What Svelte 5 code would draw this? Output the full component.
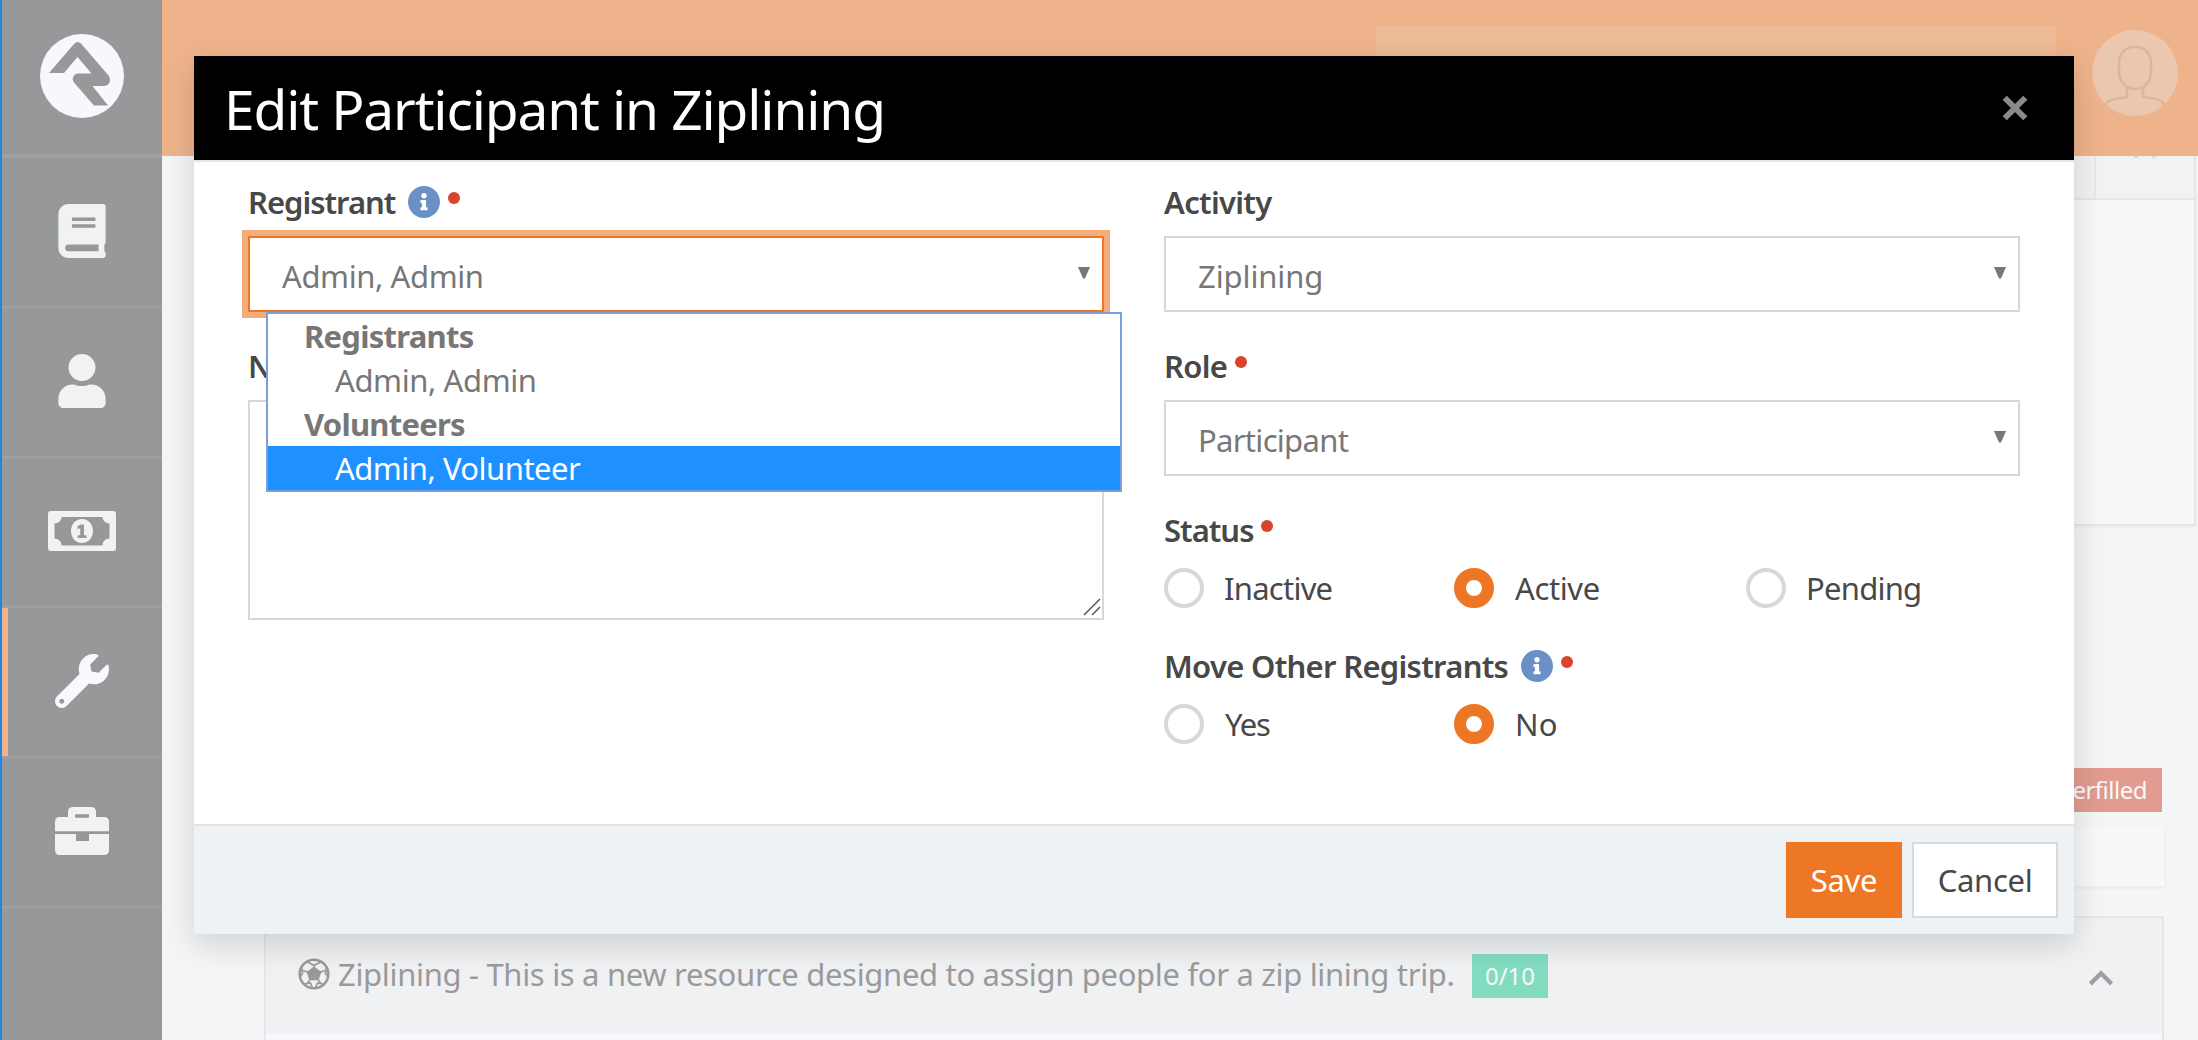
<script>
  const book =
    'M448 360V24c0-13.3-10.7-24-24-24H96C43 0 0 43 0 96v320c0 53 43 96 96 96h328c13.3 0 24-10.7 24-24v-16c0-7.5-3.5-14.3-8.9-18.7-4.2-15.4-4.2-59.3 0-74.7 5.4-4.3 8.9-11.1 8.9-18.6zM128 134c0-3.3 2.7-6 6-6h212c3.3 0 6 2.7 6 6v20c0 3.3-2.7 6-6 6H134c-3.3 0-6-2.7-6-6v-20zm0 64c0-3.3 2.7-6 6-6h212c3.3 0 6 2.7 6 6v20c0 3.3-2.7 6-6 6H134c-3.3 0-6-2.7-6-6v-20zm253.4 250H96c-17.7 0-32-14.3-32-32 0-17.6 14.4-32 32-32h285.4c-1.9 17.1-1.9 46.9 0 64z';
  const user =
    'M224 256c70.7 0 128-57.3 128-128S294.7 0 224 0 96 57.3 96 128s57.3 128 128 128zm89.6 32h-16.7c-22.2 10.2-46.9 16-72.9 16s-50.6-5.8-72.9-16h-16.7C60.2 288 0 348.2 0 422.4V464c0 26.5 21.5 48 48 48h352c26.5 0 48-21.5 48-48v-41.6c0-74.2-60.2-134.4-134.4-134.4z';
  const money =
    'M3 0H65a3 3 0 0 1 3 3V37a3 3 0 0 1-3 3H3a3 3 0 0 1-3-3V3a3 3 0 0 1 3-3ZM13.500 6C13.500 9.500 10.500 12.500 6.500 12.500V27.500C10.500 27.500 13.500 30.500 13.500 34.500H54.500C54.500 30.500 57.500 27.500 61.500 27.500V12.500C57.500 12.500 54.500 9.500 54.500 6ZM34 8C40.500 8 45 13.500 45 20S40.500 32 34 32 23 26.500 23 20 27.500 8 34 8ZM32.500 13.500 29.500 15.200V18L32.200 17.200V24.300H29.700V27H38.500V24.300H36V13.500Z';
  const wrench =
    'M507.73 109.1c-2.24-9.03-13.54-12.09-20.12-5.51l-74.36 74.36-67.88-11.31-11.31-67.88 74.36-74.36c6.62-6.62 3.43-17.9-5.66-20.16-47.38-11.74-99.55.91-136.58 37.93-39.64 39.64-50.55 97.1-34.05 147.2L18.74 402.76c-24.99 24.99-24.99 65.51 0 90.5 24.99 24.99 65.51 24.99 90.5 0l213.21-213.21c50.12 16.71 107.47 5.68 147.37-34.22 37.07-37.07 49.7-89.32 37.91-136.73zM64 472c-13.25 0-24-10.75-24-24 0-13.26 10.75-24 24-24s24 10.74 24 24c0 13.25-10.75 24-24 24z';
  const briefcase =
    'M5 10H13V5Q13 0 18 0H36Q41 0 41 5V10H49Q54 10 54 15V24.300H0V15Q0 10 5 10ZM20 7.300H34V10.700H20ZM0 27H21V34H34V27H54V43Q54 48 49 48H5Q0 48 0 43Z';
  const infoPath =
    'M256 8C119.043 8 8 119.083 8 256c0 136.997 111.043 248 248 248s248-111.003 248-248C504 119.083 392.957 8 256 8zm0 110c23.196 0 42 18.804 42 42s-18.804 42-42 42-42-18.804-42-42 18.804-42 42-42zm56 254c0 6.627-5.373 12-12 12h-88c-6.627 0-12-5.373-12-12v-24c0-6.627 5.373-12 12-12h12v-64h-12c-6.627 0-12-5.373-12-12v-24c0-6.627 5.373-12 12-12h64c6.627 0 12 5.373 12 12v100h12c6.627 0 12 5.373 12 12v24z';

  const nav = [
    { id: 'book', box: '0 0 448 512', d: book },
    { id: 'user', box: '0 0 448 512', d: user },
    { id: 'money', box: '0 0 68 40', d: money },
    { id: 'wrench', box: '0 0 512 512', d: wrench, active: true },
    { id: 'briefcase', box: '0 0 54 48', d: briefcase }
  ];

  const options = [
    { text: 'Registrants', group: true },
    { text: 'Admin, Admin' },
    { text: 'Volunteers', group: true },
    { text: 'Admin, Volunteer', selected: true }
  ];

  const statuses = ['Inactive', 'Active', 'Pending'];
  const moves = ['Yes', 'No'];
</script>

{#snippet info()}
  <svg class="info" viewBox="8 8 496 496"><path d={infoPath} /></svg>
{/snippet}

{#snippet caret()}
  <svg class="caret" viewBox="0 0 12 12"><path d="M0 0H12L7 11.500H5Z" /></svg>
{/snippet}

{#snippet radios(list, chosen)}
  <div class="radios">
    {#each list as name}
      <div class="radio">
        <span class="dot" class:on={name === chosen}></span>
        <span class={['choice', name.toLowerCase()]}>{name}</span>
      </div>
    {/each}
  </div>
{/snippet}

<div class="page">
  <nav class="sidebar">
    <div class="brand">
      <svg viewBox="0 0 84 84" width="84" height="84">
        <circle cx="42" cy="42" r="42" fill="#f7f8fb" />
        <path
          fill="#97989a"
          d="M9 39 34.500 9.500Q37.500 6.500 41 9.500L68.500 41.500Q72 47 67.500 51Q66 52 63.500 52H52.500L68 71.500H54L34 48.500Q31.500 45 34 41.500Q35 40 37.500 39.500H51.500L37.500 23 24 39Z"
        />
      </svg>
    </div>
    {#each nav as item}
      <div class="cell" class:active={item.active}>
        <svg class={['glyph', item.id]} viewBox={item.box}><path fill-rule="evenodd" d={item.d} /></svg>
      </div>
    {/each}
  </nav>

  <div class="main">
    <header class="topbar">
      <div class="search"></div>
      <svg class="avatar" viewBox="0 0 86 86">
        <defs><clipPath id="face"><circle cx="43" cy="43" r="43" /></clipPath></defs>
        <circle cx="43" cy="43" r="43" fill="#ebc7b0" />
        <g clip-path="url(#face)" fill="none" stroke="#dcb59d" stroke-width="2.600">
          <path d="M43 17C33 17 27 24 27 33V42C27 52 34 59 43 59S59 52 59 42V33C59 24 53 17 43 17Z" />
          <path d="M35 58V67C28 69 18 67 13 75M51 58V67C58 69 68 67 73 75" />
        </g>
      </svg>
    </header>

    <section class="panel">
      <div class="panel-head"><div class="tool"><i></i><i></i></div></div>
    </section>

    <div class="badge-row"><span class="badge full">Overfilled</span></div>
    <div class="strip"></div>

    <section class="resource">
      <div class="resource-head">
        <svg class="ball" viewBox="0 0 32 32">
          <circle cx="16" cy="16" r="14.300" />
          <path class="solid" d="M16 9.500 22.400 14.200 20 21.500H12L9.600 14.200Z" />
          <path d="M16 10V6M22 14.300 27 12.500M20 21.500 22.500 25M12 21.500 9.500 25M10 14.300 5 12.500M9.500 4 16 7.500 22.500 4M28.500 9 27.500 15.500 30 19M25.500 26 19.500 25 17.500 30M14.500 30 12.500 25 6.500 26M2 19 4.500 15.500 3.500 9" />
        </svg>
        <span class="resource-title">Ziplining - This is a new resource designed to assign people for a zip lining trip.</span>
        <span class="badge count">0/10</span>
        <svg class="chevron" viewBox="0 0 24 16"><path d="M2 14 12 4 22 14" /></svg>
      </div>
    </section>
  </div>

  <div class="modal">
    <div class="modal-head">
      <h1>Edit Participant in Ziplining</h1>
      <svg class="close" viewBox="0 0 24 24"><path d="M2.500 2.500 21.500 21.500M21.500 2.500 2.500 21.500" /></svg>
    </div>

    <div class="modal-body">
      <div class="col">
        <div class="label"><span class="tight">Registrant</span>{@render info()}<b class="req"></b></div>
        <div class="select focus">
          <span>Admin, Admin</span>
          {@render caret()}
          <div class="menu">
            {#each options as o}
              <div class="option" class:group={o.group} class:selected={o.selected}>{o.text}</div>
            {/each}
          </div>
        </div>
        <div class="label"><span>Notes</span></div>
        <div class="textarea">
          <svg viewBox="0 0 18 18"><path d="M1 17 17 1M9 17 17 9" /></svg>
        </div>
      </div>

      <div class="col">
        <div class="label"><span>Activity</span></div>
        <div class="select"><span class="plain">Ziplining</span>{@render caret()}</div>
        <div class="label"><span>Role</span><b class="req"></b></div>
        <div class="select"><span class="snug">Participant</span>{@render caret()}</div>
        <div class="label"><span class="tight">Status</span><b class="req"></b></div>
        {@render radios(statuses, 'Active')}
        <div class="label lower"><span>Move Other Registrants</span>{@render info()}<b class="req"></b></div>
        {@render radios(moves, 'No')}
      </div>
    </div>

    <div class="modal-foot">
      <button class="save">Save</button>
      <button class="cancel">Cancel</button>
    </div>
  </div>
</div>

<style>
  :global(body) {
    background: #f4f5f7;
  }
  .page,
  .page * {
    box-sizing: border-box;
  }
  .page {
    position: relative;
    display: flex;
    width: 2198px;
    height: 1040px;
    overflow: hidden;
    background: #f4f5f7;
    font-family: 'Noto Sans', 'Open Sans', sans-serif;
    font-size: 31px;
    letter-spacing: -0.4px;
    color: #484848;
  }

  .sidebar {
    width: 162px;
    flex: none;
    background: #97989a;
    border-left: 2px solid #1e88e0;
  }
  .brand {
    height: 158px;
    padding: 34px 0 0 38px;
    border-bottom: 4px solid #a0a1a3;
  }
  .cell {
    display: flex;
    align-items: center;
    justify-content: center;
    height: 150px;
    padding-bottom: 3px;
    border-bottom: 2px solid #9fa0a2;
  }
  .cell.active {
    position: relative;
  }
  .cell.active::before {
    content: '';
    position: absolute;
    left: 0;
    top: 0;
    width: 6px;
    height: 148px;
    background: #eeb38b;
  }
  .glyph {
    fill: #f0f2f4;
    height: 54px;
    width: 54px;
  }
  .glyph.money {
    width: 68px;
    height: 40px;
  }
  .glyph.briefcase {
    height: 48px;
  }
  .glyph.wrench {
    fill: #f8f9fc;
  }

  .main {
    flex: 1;
    min-width: 0;
  }
  .topbar {
    display: flex;
    justify-content: flex-end;
    height: 156px;
    padding-right: 20px;
    background: #eeb38b;
  }
  .search {
    width: 680px;
    height: 94px;
    margin: 26px 36px 0 0;
    background: #edbb95;
  }
  .avatar {
    width: 86px;
    height: 86px;
    margin-top: 30px;
  }

  .panel {
    height: 370px;
    margin: 0 2px 0 102px;
    background: #f7f8fa;
    border: 2px solid #e4e6e8;
    border-top: 0;
    box-shadow: 0 2px 3px rgba(0, 0, 0, 0.04);
  }
  .panel-head {
    display: flex;
    justify-content: flex-end;
    height: 44px;
    background: #f0f2f4;
    border-bottom: 2px solid #e4e6e8;
  }
  .tool {
    display: flex;
    gap: 14px;
    width: 100px;
    padding-left: 38px;
    border-left: 2px solid #e6e8ea;
  }
  .tool i {
    width: 4px;
    height: 2px;
    background: #d9dadc;
  }

  .badge-row {
    display: flex;
    justify-content: flex-end;
    padding: 242px 36px 0 0;
  }
  .badge {
    display: flex;
    align-items: center;
    height: 44px;
    font-size: 24px;
    color: #f8f9fb;
  }
  .full {
    padding: 0 15px 2px;
    letter-spacing: -0.5px;
    background: #e19b90;
  }
  .strip {
    height: 58px;
    margin: 16px 34px 0 102px;
    background: #f7f8fa;
    box-shadow: 0 2px 4px rgba(0, 0, 0, 0.05);
  }
  .resource {
    height: 200px;
    margin: 30px 34px 0 102px;
    border: 2px solid #e4e6e8;
    background: #f7f8fb;
  }
  .resource-head {
    display: flex;
    align-items: center;
    height: 116px;
    padding: 0 48px 0 32px;
    background: #f0f1f3;
  }
  .ball {
    width: 32px;
    height: 32px;
    margin: -4px 8px 0 0;
    fill: none;
    stroke: #98999a;
    stroke-width: 2.6;
  }
  .ball path {
    stroke-width: 1.6;
  }
  .ball .solid {
    fill: #98999a;
  }
  .resource-title {
    width: 1134px;
    margin-top: -4px;
    white-space: nowrap;
    letter-spacing: -0.32px;
    color: #9a9a9b;
  }
  .count {
    justify-content: center;
    width: 76px;
    padding-bottom: 1px;
    letter-spacing: 0;
    background: #81dcc0;
  }
  .chevron {
    width: 26px;
    height: 17px;
    margin: 2px 0 0 auto;
    fill: none;
    stroke: #9e9fa2;
    stroke-width: 4;
  }

  .modal {
    position: absolute;
    left: 194px;
    top: 56px;
    display: flex;
    flex-direction: column;
    width: 1880px;
    height: 878px;
    background: #fff;
    box-shadow: 0 10px 30px rgba(0, 0, 0, 0.15);
  }
  .modal-head {
    display: flex;
    align-items: center;
    justify-content: space-between;
    height: 106px;
    padding: 0 46px 0 30px;
    background: #000;
    border-bottom: 2px solid #e5e5e5;
  }
  h1 {
    margin: 0;
    font-size: 55px;
    font-weight: 400;
    line-height: 1;
    letter-spacing: -1.12px;
    color: #fff;
  }
  .close {
    width: 26px;
    height: 26px;
    fill: none;
    stroke: #8a8a8a;
    stroke-width: 5.4;
  }

  .modal-body {
    display: grid;
    grid-template-columns: 856px 856px;
    gap: 60px;
    flex: 1;
    padding: 20px 54px 0;
  }
  .label {
    display: flex;
    align-items: center;
    height: 40px;
    margin: 0 0 14px;
    font-weight: 600;
    letter-spacing: -0.7px;
  }
  .tight {
    letter-spacing: -1px;
  }
  .info {
    width: 32px;
    height: 32px;
    margin-left: 13px;
    fill: #6a91c6;
  }
  .req {
    width: 12px;
    height: 12px;
    margin: -8px 0 0 8px;
    border-radius: 50%;
    background: #d9442d;
  }
  .select {
    position: relative;
    display: flex;
    align-items: center;
    justify-content: space-between;
    height: 76px;
    margin-bottom: 34px;
    padding: 4px 12px 0 32px;
    border: 2px solid #d8d8d8;
    background: #fff;
    color: #777;
  }
  .select.focus {
    border-color: #ee7725;
    box-shadow: 0 0 0 6px #f6ad7c;
  }
  .plain {
    letter-spacing: -0.1px;
  }
  .snug {
    letter-spacing: -0.7px;
  }
  .caret {
    width: 12px;
    height: 12px;
    margin-top: -6px;
    fill: #777;
  }
  .menu {
    position: absolute;
    z-index: 2;
    left: 16px;
    top: 74px;
    width: 856px;
    border: 2px solid #7b9fd8;
    background: #fff;
  }
  .option {
    height: 44px;
    padding-left: 67px;
    line-height: 44px;
  }
  .option.group {
    padding-left: 36px;
    font-weight: 700;
    letter-spacing: -0.75px;
  }
  .option.selected {
    background: #1e90ff;
    color: #fff;
    letter-spacing: -0.5px;
  }
  .textarea {
    display: flex;
    align-items: flex-end;
    justify-content: flex-end;
    height: 220px;
    padding: 0 1px 2px 0;
    border: 2px solid #d8d8d8;
  }
  .textarea svg {
    width: 18px;
    height: 18px;
    stroke: #555;
    stroke-width: 1.5;
  }

  .radios {
    display: grid;
    grid-template-columns: 290px 292px 274px;
    padding-top: 4px;
  }
  .radio {
    display: flex;
    align-items: center;
    gap: 19px;
    height: 40px;
  }
  .dot {
    width: 40px;
    height: 40px;
    border: 4px solid #d8d8d8;
    border-radius: 50%;
    background: #fff;
  }
  .dot.on {
    border: 12px solid #ee7725;
  }
  .choice {
    line-height: 40px;
  }
  .inactive,
  .pending {
    margin-left: 1px;
    letter-spacing: -0.75px;
  }
  .choice.active,
  .yes {
    margin-left: 2px;
  }
  .yes {
    letter-spacing: -1.2px;
  }
  .no {
    margin-left: 2px;
    letter-spacing: 0.3px;
  }
  .lower {
    margin-top: 38px;
  }

  .modal-foot {
    display: flex;
    justify-content: flex-end;
    gap: 10px;
    height: 110px;
    padding: 16px;
    background: #eef2f5;
    border-top: 2px solid #e3e4e5;
  }
  button {
    height: 76px;
    padding: 0;
    border: 0;
    font: inherit;
    letter-spacing: -0.3px;
  }
  .save {
    width: 116px;
    background: #ee7725;
    color: #fff;
  }
  .cancel {
    width: 146px;
    border: 2px solid #d8dadb;
    background: #fff;
    color: #484848;
  }
</style>
